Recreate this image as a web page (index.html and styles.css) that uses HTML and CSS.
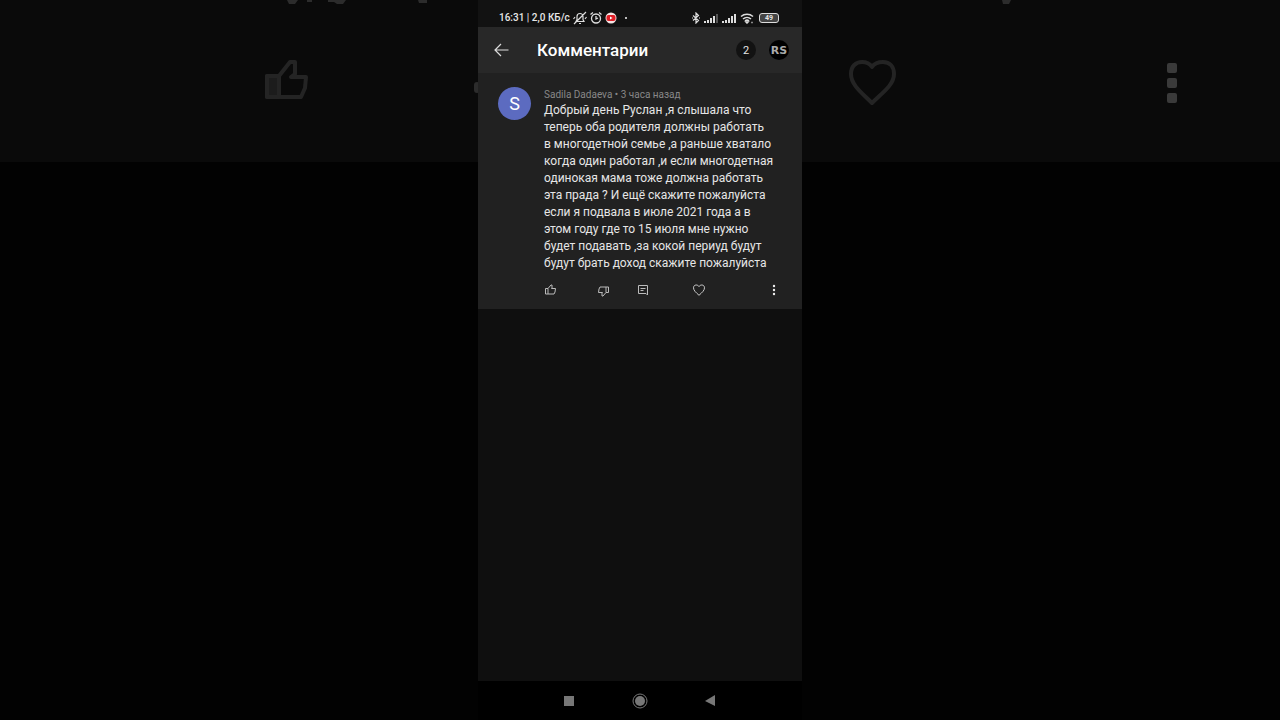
FILE: index.html
```
<!DOCTYPE html>
<html lang="ru">

<head>
  <meta charset="UTF-8">
  <meta name="viewport" content="width=device-width, initial-scale=1.0">
  <title>Комментарии</title>
  <link rel="stylesheet" href="styles.css">
</head>

<body>
  <!-- dimmed enlarged backdrop behind the phone -->
  <svg class="backdrop" viewBox="0 0 1280 720" preserveAspectRatio="xMidYMin slice" aria-hidden="true">
    <rect width="1280" height="720" fill="#020202" />
    <rect width="1280" height="162" fill="#0a0a0a" />
    <g fill="#2c2c2c">
      <path d="M287 0h11l-3 4h-6zM307 0h5v2h-5zM328 0h18l-3 4h-6l-3-2h-6zM418 0h9v3h-8zM1002 0h9l-2 4h-6z" />
      <rect x="474" y="82" width="6" height="11" rx="3" />
    </g>
    <g fill="none" stroke="#242424" stroke-width="4" stroke-linejoin="round">
      <path d="M267 76h12v21h-12zM279 76l11-14h5v12l-4 3h15l-1 11-4 9h-22" />
      <path d="M267 76h12v21h-12z" fill="#1c1c1c" />
      <path d="M872 103c-10-10-21-18-21-29 0-8 5-12 11-12 5 0 8 2 10 5 2-3 6-5 11-5 7 0 11 5 11 12 0 11-12 19-22 29z" />
    </g>
    <g fill="#3a3a3a">
      <rect x="1167" y="63" width="10" height="10" rx="2" />
      <rect x="1167" y="78" width="10" height="10" rx="2" />
      <rect x="1167" y="93" width="10" height="10" rx="2" />
    </g>
  </svg>

  <div class="phone">
    <div class="status">
      <span class="status-time">16:31 | 2,0 КБ/с</span>
      <svg width="14" height="14" viewBox="0 0 14 14" fill="none" stroke="#ddd" stroke-width="1.200">
        <path d="M3 10.500h8l-1-2v-3a3 3 0 0 0-6 0v3zM6 12.500h2M1 13L13 1M.5 8l1.500-2M12 8l1.500-2" />
      </svg>
      <svg width="12" height="14" viewBox="0 0 12 14" fill="none" stroke="#ddd" stroke-width="1.300">
        <circle cx="6" cy="7.500" r="4.500" />
        <path d="M6 5v3l2-1M.5 3.500l2.500-2M11.500 3.500L9 1.500" />
      </svg>
      <svg class="tube" width="12" height="12" viewBox="0 0 12 12">
        <circle cx="6" cy="6" r="5.500" fill="#f4e4e4" />
        <rect x="1.500" y="3" width="9" height="6" rx="2" fill="#e01c24" />
        <path d="M5 4.500v3l2.500-1.500z" fill="#fff" />
      </svg>
      <span class="status-dot"></span>
      <div class="status-right">
        <svg width="8" height="12" viewBox="0 0 8 12" fill="none" stroke="#ddd" stroke-width="1.200">
          <path d="M1 3.500l5.500 5L4 11V1l2.500 2.500-5.500 5M0 6h1M7 6h1" />
        </svg>
        <svg width="14" height="10" viewBox="0 0 14 10" fill="#ddd">
          <path d="M0 8h2v2H0zM3 7h2v3H3zM6 5h2v5H6zM9 3h2v7H9z" />
          <path d="M12 1h2v9h-2z" fill="#555" />
        </svg>
        <svg width="14" height="10" viewBox="0 0 14 10" fill="#ddd">
          <path d="M0 8h2v2H0zM3 7h2v3H3zM6 5h2v5H6zM9 3h2v7H9zM12 1h2v9h-2z" />
        </svg>
        <svg width="15" height="12" viewBox="0 0 15 12" fill="none" stroke="#ddd" stroke-width="1.500">
          <path d="M1 4.500a9 9 0 0 1 12 0M3 7a6 6 0 0 1 8 0M5 9a3 3 0 0 1 4 0" />
          <path d="M6 10l1 1 1-1z" fill="#ddd" />
          <path d="M11 10.500h2" stroke="#888" />
        </svg>
        <span class="battery">49</span>
      </div>
    </div>

    <header class="header">
      <button class="back" aria-label="Назад">
        <svg width="16" height="14" viewBox="0 0 16 14" fill="none" stroke="#ddd" stroke-width="1.200">
          <path d="M15.500 7H2M8 1L2 7l6 6" />
        </svg>
      </button>
      <h1>Комментарии</h1>
      <button class="round">2</button>
      <button class="round channel">RS</button>
    </header>

    <article class="comment">
      <div class="avatar">S</div>
      <div class="comment-body">
        <div class="author">Sadila Dadaeva • 3 часа назад</div>
        <p>
          Добрый день Руслан ,я слышала что<br>
          теперь оба родителя должны работать<br>
          в многодетной семье ,а раньше хватало<br>
          когда один работал ,и если многодетная<br>
          одинокая мама тоже должна работать<br>
          эта прада ? И ещё скажите пожалуйста<br>
          если я подвала в июле 2021 года а в<br>
          этом году где то 15 июля мне нужно<br>
          будет подавать ,за кокой периуд будут<br>
          будут брать доход скажите пожалуйста
        </p>
        <div class="actions">
          <button class="like" aria-label="Нравится">
            <svg width="12" height="12" viewBox="0 0 12 12" fill="none" stroke="#bbb">
              <path d="M1.500 4.500h2.500v5.500H1.500zM4 4.500L7 1h1v3l-.5.5h4l-.5 3.500-1 2H4" />
            </svg>
          </button>
          <button class="dislike" aria-label="Не нравится">
            <svg width="12" height="12" viewBox="0 0 12 12" fill="none" stroke="#bbb">
              <path d="M11.500 7.500H9V2h2.500zM9 7.500L6 11H5V8l.5-.5h-4L2 4l1-2h6" />
            </svg>
          </button>
          <button class="reply" aria-label="Ответить">
            <svg width="12" height="12" viewBox="0 0 12 12" fill="none" stroke="#bbb">
              <path d="M1.500 1.500h9v9.500L9 9.500H1.500zM3.500 4.500h5M3.500 6.500h3" />
            </svg>
          </button>
          <button class="heart" aria-label="Отметить">
            <svg width="12" height="12" viewBox="0 0 12 12" fill="none" stroke="#ccc">
              <path d="M6 11.300C3 8.500.5 6.500.5 3.800.5 2 1.800 1 3.200 1 4.500 1 5.500 1.700 6 2.500 6.500 1.700 7.500 1 8.800 1c1.400 0 2.700 1 2.700 2.800C11.500 6.500 9 8.500 6 11.300z" />
            </svg>
          </button>
          <button class="more" aria-label="Ещё">
            <svg width="4" height="12" viewBox="0 0 4 12" fill="#eee">
              <circle cx="2" cy="2" r="1.200" />
              <circle cx="2" cy="6" r="1.200" />
              <circle cx="2" cy="10" r="1.200" />
            </svg>
          </button>
        </div>
      </div>
    </article>

    <nav class="navbar">
      <button aria-label="Недавние">
        <svg width="16" height="16" viewBox="0 0 16 16"><path d="M3 3h10v10H3z" fill="#777" /></svg>
      </button>
      <button aria-label="Домой">
        <svg width="16" height="16" viewBox="0 0 16 16">
          <circle cx="8" cy="8" r="7" fill="none" stroke="#777" />
          <circle cx="8" cy="8" r="5" fill="#777" />
        </svg>
      </button>
      <button aria-label="Назад">
        <svg width="16" height="16" viewBox="0 0 16 16"><path d="M12 2v11L2 8z" fill="#777" /></svg>
      </button>
    </nav>
  </div>
</body>

</html>
```
FILE: styles.css
```
* {
  box-sizing: border-box;
}

body {
  margin: 0;
  background-color: #020202;
  font-family: Roboto, "Liberation Sans", sans-serif;
  color: #e6e6e6;
}

button {
  display: flex;
  align-items: center;
  justify-content: center;
  padding: 0;
  border: none;
  background: none;
  color: inherit;
  font-family: inherit;
  cursor: pointer;
}

svg {
  display: block;
  flex-shrink: 0;
}

.backdrop {
  position: absolute;
  top: 0;
  left: 0;
  width: 100%;
  height: 100%;
}

.phone {
  position: relative;
  display: flex;
  flex-direction: column;
  min-height: 100vh;
  width: 45vh;
  margin: 0 auto;
  background-color: #0f0f0f;
}

.status {
  display: flex;
  align-items: center;
  gap: 3px;
  height: 27px;
  padding: 8px 23px 0 21px;
  background-color: #121212;
}

.status-time {
  font-size: 10px;
  font-weight: 500;
  line-height: 16px;
  white-space: nowrap;
}

.status-dot {
  width: 2px;
  height: 2px;
  margin-left: 5px;
  background-color: #bbb;
}

.status-right {
  display: flex;
  align-items: center;
  gap: 4px;
  margin-left: auto;
}

.battery {
  width: 20px;
  border: 1px solid #ddd;
  border-radius: 3px;
  background-color: #444;
  font-size: 7px;
  font-weight: 700;
  line-height: 8px;
  text-align: center;
}

.header {
  display: flex;
  align-items: center;
  height: 46px;
  padding: 0 13px 0 15px;
  background-color: #282828;
}

.back {
  width: 16px;
  height: 24px;
}

h1 {
  flex: 1;
  margin: 0 0 0 28px;
  font-size: 17px;
  font-weight: 500;
  line-height: 24px;
  color: #fff;
}

.round {
  width: 20px;
  height: 20px;
  margin-left: 13px;
  border-radius: 50%;
  background-color: #121212;
  font-size: 11px;
}

.channel {
  background-color: #000;
  color: #aaa;
  font-family: "DejaVu Sans", sans-serif;
  font-weight: 700;
}

.comment {
  display: flex;
  gap: 13px;
  padding: 14px 20px 12px;
  background-color: #212121;
}

.avatar {
  flex-shrink: 0;
  width: 33px;
  height: 33px;
  border-radius: 50%;
  background-color: #5c6bc0;
  color: #fff;
  font-size: 18px;
  line-height: 33px;
  text-align: center;
}

.comment-body {
  flex: 1;
}

.author {
  font-size: 10px;
  line-height: 15px;
  color: #888;
}

p {
  margin: 0;
  font-size: 12px;
  line-height: 17px;
  white-space: nowrap;
}

.actions {
  display: flex;
  align-items: center;
  margin-top: 11px;
}

.dislike {
  margin-left: 41px;
  padding-top: 2px;
}

.reply {
  margin-left: 28px;
}

.heart {
  margin-left: 44px;
}

.more {
  margin-left: auto;
  margin-right: 6px;
}

.navbar {
  display: flex;
  align-items: center;
  justify-content: center;
  gap: 55px;
  height: 39px;
  margin-top: auto;
  background-color: #000;
}
```
